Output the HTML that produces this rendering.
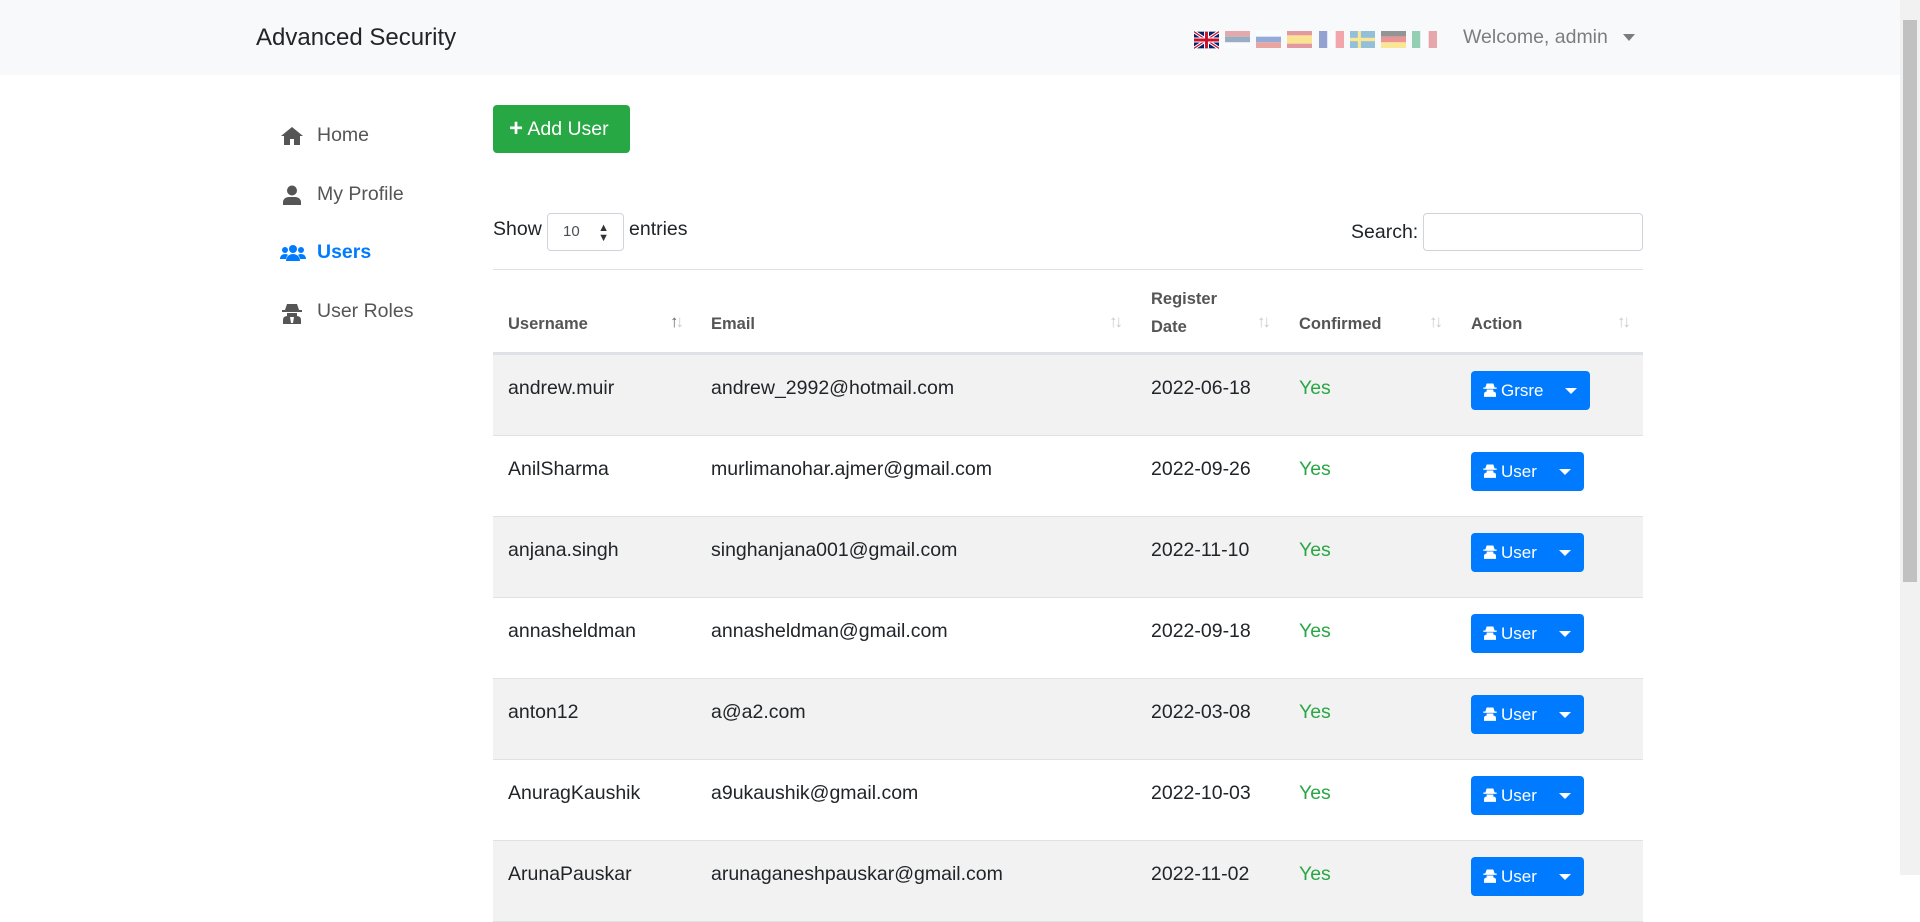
<!DOCTYPE html>
<html><head><meta charset="utf-8"><style>
*{box-sizing:border-box;margin:0;padding:0}
body{width:1920px;height:875px;overflow:hidden;background:#fff;font-family:"Liberation Sans",sans-serif;color:#212529;position:relative}
.nav{position:absolute;left:0;top:0;width:1900px;height:75px;background:#f8f9fa}
.brand{position:absolute;left:256px;top:24px;font-size:24px;color:#212529}
.flag{position:absolute;top:31px;width:25px;height:17px;opacity:.4}
.welcome{position:absolute;left:1463px;top:26px;font-size:19.5px;color:rgba(0,0,0,.5)}
.caret{position:absolute;left:1623px;top:34px;border-left:6px solid transparent;border-right:6px solid transparent;border-top:7px solid rgba(0,0,0,.5)}
.sb{position:absolute;left:1900px;top:0;width:20px;height:875px;background:#f1f1f1}
.thumb{position:absolute;left:1903px;top:20px;width:14px;height:562px;background:#c1c1c1}
.side{position:absolute;left:280px;font-size:19.5px;color:#555}
.side svg{position:absolute;left:0;top:2px}
.side span{position:absolute;left:37px;top:0;white-space:nowrap}
.btnadd{position:absolute;left:493px;top:105px;width:137px;height:48px;background:#28a745;border-radius:4px;color:#fff;font-size:19.5px;line-height:48px;padding-left:16px}
.abs{position:absolute;font-size:19.5px}
.sel{position:absolute;left:547px;top:213px;width:77px;height:38px;border:1px solid #ced4da;border-radius:4px;font-size:15px;line-height:36px;padding-left:15px;color:#495057}
.inp{position:absolute;left:1423px;top:213px;width:220px;height:38px;border:1px solid #ced4da;border-radius:4px}
.hr{position:absolute;left:493px;top:269px;width:1150px;height:1px;background:#dee2e6}
.th{position:absolute;font-size:16.5px;font-weight:bold;color:#555;line-height:28px}
.ar{position:absolute;font-size:17px;color:#ccc;letter-spacing:-3px}
.row{position:absolute;left:493px;width:1150px;height:81px;border-bottom:1px solid #dee2e6}
.row div{position:absolute;top:18px;font-size:19.5px;line-height:30px}
.yes{color:#28a745}
.ab{position:absolute;top:16px!important;left:978px;height:39px;background:#007bff;border-radius:4px;color:#fff;font-size:17px!important;line-height:39px!important;padding-left:11px}
.ab svg{vertical-align:-2px;margin-right:3px}
.ab i{position:absolute;right:13px;top:17px;border-left:6px solid transparent;border-right:6px solid transparent;border-top:6px solid #fff}
</style></head><body>
<div class="nav">
<div class="brand">Advanced Security</div>
<svg class="flag" style="left:1194px;top:30px;height:20px;opacity:1" viewBox="0 0 60 40"><rect width="60" height="40" fill="#012169"/><path d="M0 0L60 40M60 0L0 40" stroke="#fff" stroke-width="8"/><path d="M0 0L60 40M60 0L0 40" stroke="#c8102e" stroke-width="3"/><path d="M30 0V40M0 20H60" stroke="#fff" stroke-width="12"/><path d="M30 0V40M0 20H60" stroke="#c8102e" stroke-width="7"/></svg>
<svg class="flag" style="left:1225px" viewBox="0 0 3 3" preserveAspectRatio="none"><rect width="3" height="1" fill="#c6363c"/><rect y="1" width="3" height="1" fill="#0c4076"/><rect y="2" width="3" height="1" fill="#fff"/></svg>
<svg class="flag" style="left:1256px" viewBox="0 0 3 3" preserveAspectRatio="none"><rect width="3" height="1" fill="#fff"/><rect y="1" width="3" height="1" fill="#0039a6"/><rect y="2" width="3" height="1" fill="#d52b1e"/></svg>
<svg class="flag" style="left:1287px" viewBox="0 0 4 4" preserveAspectRatio="none"><rect width="4" height="4" fill="#c60b1e"/><rect y="1" width="4" height="2" fill="#ffc400"/></svg>
<svg class="flag" style="left:1319px" viewBox="0 0 3 3" preserveAspectRatio="none"><rect width="1" height="3" fill="#002395"/><rect x="1" width="1" height="3" fill="#fff"/><rect x="2" width="1" height="3" fill="#ed2939"/></svg>
<svg class="flag" style="left:1350px" viewBox="0 0 16 10" preserveAspectRatio="none"><rect width="16" height="10" fill="#006aa7"/><rect x="5" width="2" height="10" fill="#fecc00"/><rect y="4" width="16" height="2" fill="#fecc00"/></svg>
<svg class="flag" style="left:1381px" viewBox="0 0 3 3" preserveAspectRatio="none"><rect width="3" height="1" fill="#000"/><rect y="1" width="3" height="1" fill="#d00"/><rect y="2" width="3" height="1" fill="#ffce00"/></svg>
<svg class="flag" style="left:1412px" viewBox="0 0 3 3" preserveAspectRatio="none"><rect width="1" height="3" fill="#009246"/><rect x="1" width="1" height="3" fill="#fff"/><rect x="2" width="1" height="3" fill="#ce2b37"/></svg>
<div class="welcome">Welcome, admin</div><div class="caret"></div>
</div>
<div class="sb"></div><div class="thumb"></div>

<div class="side" style="top:124px"><svg width="24" height="20" viewBox="0 0 24 20"><path d="M12 1L1 10h3v9h6v-6h4v6h6v-9h3z" fill="#555"/></svg><span>Home</span></div>
<div class="side" style="top:183px"><svg width="24" height="20" viewBox="0 0 24 20"><circle cx="12" cy="5.5" r="5" fill="#555"/><path d="M3 20v-3c0-3 3-5 6-5h6c3 0 6 2 6 5v3z" fill="#555"/></svg><span>My Profile</span></div>
<div class="side" style="top:241px;color:#007bff;font-weight:bold"><svg width="26" height="20" viewBox="0 0 26 20"><circle cx="13" cy="6" r="4" fill="#007bff"/><circle cx="5" cy="7" r="3" fill="#007bff"/><circle cx="21" cy="7" r="3" fill="#007bff"/><path d="M6 18c0-4 3-7 7-7s7 3 7 7z" fill="#007bff"/><path d="M0 16c0-3 2-5 5-5 2 0 3 1 3 1-1 1-2 3-2 4z M26 16c0-3-2-5-5-5-2 0-3 1-3 1 1 1 2 3 2 4z" fill="#007bff"/></svg><span>Users</span></div>
<div class="side" style="top:300px"><svg width="24" height="22" viewBox="0 0 24 22"><path d="M7 2h10l2 6H5z" fill="#555"/><rect x="2" y="8" width="20" height="2" fill="#555"/><path d="M7 11h10v3H7z" fill="#555"/><path d="M3 22v-4c0-3 2-4 5-4h8c3 0 5 1 5 4v4z" fill="#555"/><path d="M10 15h4l-1 6h-2z" fill="#fff"/></svg><span>User Roles</span></div>

<div class="btnadd"><b style="font-size:24px;vertical-align:-1px">+</b> Add User</div>
<div class="abs" style="left:493px;top:218px">Show</div>
<div class="sel">10<span style="position:absolute;right:14px;top:0;font-size:11px;line-height:10px;top:9px;color:#333">▲<br>▼</span></div>
<div class="abs" style="left:629px;top:218px">entries</div>
<div class="abs" style="left:1351px;top:221px">Search:</div>
<div class="inp"></div>
<div class="hr"></div>

<div class="th" style="left:508px;top:310px">Username</div>
<div class="th" style="left:711px;top:310px">Email</div>
<div class="th" style="left:1151px;top:285px">Register<br>Date</div>
<div class="th" style="left:1299px;top:310px">Confirmed</div>
<div class="th" style="left:1471px;top:310px">Action</div>
<div class="ar" style="left:670px;top:312px"><span style="color:#666">↑</span>↓</div>
<div class="ar" style="left:1109px;top:312px">↑↓</div>
<div class="ar" style="left:1257px;top:312px">↑↓</div>
<div class="ar" style="left:1429px;top:312px">↑↓</div>
<div class="ar" style="left:1617px;top:312px">↑↓</div>
<div style="position:absolute;left:493px;top:352px;width:1150px;height:3px;background:#dee2e6"></div>

<div class="row" style="top:355px;background:#f2f2f2"><div style="left:15px">andrew.muir</div><div style="left:218px">andrew_2992@hotmail.com</div><div style="left:658px">2022-06-18</div><div class="yes" style="left:806px">Yes</div><div class="ab" style="width:119px"><svg width="16" height="17" viewBox="0 0 24 22"><path d="M7 2h10l2 6H5z" fill="#fff"/><rect x="2" y="8" width="20" height="2" fill="#fff"/><path d="M7 11h10v3H7z" fill="#fff"/><path d="M3 22v-4c0-3 2-4 5-4h8c3 0 5 1 5 4v4z" fill="#fff"/></svg>Grsre<i></i></div></div>
<div class="row" style="top:436px"><div style="left:15px">AnilSharma</div><div style="left:218px">murlimanohar.ajmer@gmail.com</div><div style="left:658px">2022-09-26</div><div class="yes" style="left:806px">Yes</div><div class="ab" style="width:113px"><svg width="16" height="17" viewBox="0 0 24 22"><path d="M7 2h10l2 6H5z" fill="#fff"/><rect x="2" y="8" width="20" height="2" fill="#fff"/><path d="M7 11h10v3H7z" fill="#fff"/><path d="M3 22v-4c0-3 2-4 5-4h8c3 0 5 1 5 4v4z" fill="#fff"/></svg>User<i></i></div></div>
<div class="row" style="top:517px;background:#f2f2f2"><div style="left:15px">anjana.singh</div><div style="left:218px">singhanjana001@gmail.com</div><div style="left:658px">2022-11-10</div><div class="yes" style="left:806px">Yes</div><div class="ab" style="width:113px"><svg width="16" height="17" viewBox="0 0 24 22"><path d="M7 2h10l2 6H5z" fill="#fff"/><rect x="2" y="8" width="20" height="2" fill="#fff"/><path d="M7 11h10v3H7z" fill="#fff"/><path d="M3 22v-4c0-3 2-4 5-4h8c3 0 5 1 5 4v4z" fill="#fff"/></svg>User<i></i></div></div>
<div class="row" style="top:598px"><div style="left:15px">annasheldman</div><div style="left:218px">annasheldman@gmail.com</div><div style="left:658px">2022-09-18</div><div class="yes" style="left:806px">Yes</div><div class="ab" style="width:113px"><svg width="16" height="17" viewBox="0 0 24 22"><path d="M7 2h10l2 6H5z" fill="#fff"/><rect x="2" y="8" width="20" height="2" fill="#fff"/><path d="M7 11h10v3H7z" fill="#fff"/><path d="M3 22v-4c0-3 2-4 5-4h8c3 0 5 1 5 4v4z" fill="#fff"/></svg>User<i></i></div></div>
<div class="row" style="top:679px;background:#f2f2f2"><div style="left:15px">anton12</div><div style="left:218px">a@a2.com</div><div style="left:658px">2022-03-08</div><div class="yes" style="left:806px">Yes</div><div class="ab" style="width:113px"><svg width="16" height="17" viewBox="0 0 24 22"><path d="M7 2h10l2 6H5z" fill="#fff"/><rect x="2" y="8" width="20" height="2" fill="#fff"/><path d="M7 11h10v3H7z" fill="#fff"/><path d="M3 22v-4c0-3 2-4 5-4h8c3 0 5 1 5 4v4z" fill="#fff"/></svg>User<i></i></div></div>
<div class="row" style="top:760px"><div style="left:15px">AnuragKaushik</div><div style="left:218px">a9ukaushik@gmail.com</div><div style="left:658px">2022-10-03</div><div class="yes" style="left:806px">Yes</div><div class="ab" style="width:113px"><svg width="16" height="17" viewBox="0 0 24 22"><path d="M7 2h10l2 6H5z" fill="#fff"/><rect x="2" y="8" width="20" height="2" fill="#fff"/><path d="M7 11h10v3H7z" fill="#fff"/><path d="M3 22v-4c0-3 2-4 5-4h8c3 0 5 1 5 4v4z" fill="#fff"/></svg>User<i></i></div></div>
<div class="row" style="top:841px;background:#f2f2f2"><div style="left:15px">ArunaPauskar</div><div style="left:218px">arunaganeshpauskar@gmail.com</div><div style="left:658px">2022-11-02</div><div class="yes" style="left:806px">Yes</div><div class="ab" style="width:113px"><svg width="16" height="17" viewBox="0 0 24 22"><path d="M7 2h10l2 6H5z" fill="#fff"/><rect x="2" y="8" width="20" height="2" fill="#fff"/><path d="M7 11h10v3H7z" fill="#fff"/><path d="M3 22v-4c0-3 2-4 5-4h8c3 0 5 1 5 4v4z" fill="#fff"/></svg>User<i></i></div></div>
</body></html>
